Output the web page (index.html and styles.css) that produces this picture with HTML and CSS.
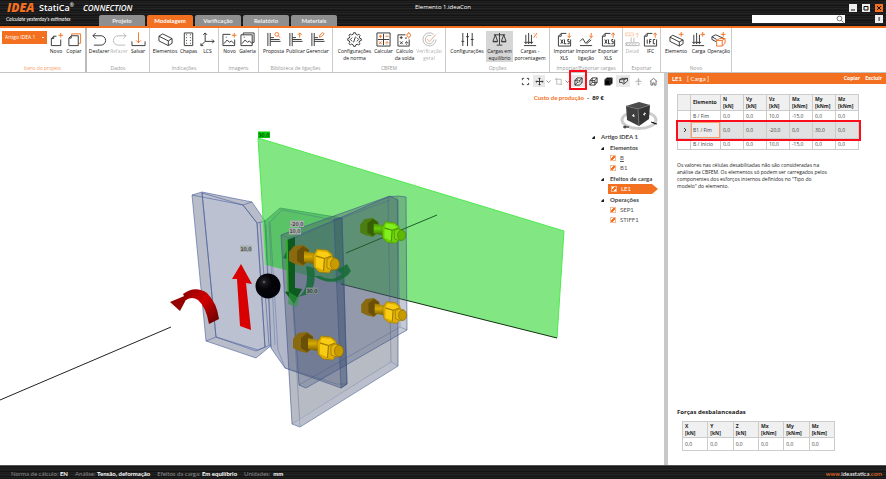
FILE: index.html
```html
<!DOCTYPE html>
<html lang="pt">
<head>
<meta charset="utf-8">
<title>Elemento 1.ideaCon</title>
<link rel="stylesheet" href="styles.css">
</head>
<body>
<svg class="defs" aria-hidden="true">
  <defs>
    <symbol id="new" viewBox="0 0 16 16"><path d="M5 4.500h3M12.500 8v6.500h-10V7L5 4.500V7H2.500"/><path class="o" d="M12.500 1v5M10 3.500h5"/></symbol>
    <symbol id="copy" viewBox="0 0 16 16"><path class="o" d="M5 3.500V2h9.500v10H12.500"/><path d="M4.500 4h7.500v10.500h-10V6.500L4.500 4v2.500H2"/></symbol>
    <symbol id="undo" viewBox="0 0 16 16"><path d="M4 1L1 4l3 3M1 4h8.500a5 5 0 0 1 0 10H2"/></symbol>
    <symbol id="redo" viewBox="0 0 16 16"><path d="M12 1l3 3-3 3M15 4H6.500a5 5 0 0 0 0 10H14"/></symbol>
    <symbol id="save" viewBox="0 0 16 16"><path d="M1 10v4.500h14V10"/><path class="o" d="M8 0.500v11M5.500 9L8 11.500 10.500 9"/></symbol>
    <symbol id="beam" viewBox="0 0 16 16"><path d="M1 4.500L5 2l10 5v5l-4 2.500-10-5zM1 4.500l10 5L15 7M11 9.500v5"/></symbol>
    <symbol id="plate" viewBox="0 0 16 16"><path d="M3.500 1h9v13.500h-9z"/><path d="M5.500 3h1M9.500 3h1M5.500 6h1M9.500 6h1M5.500 9h1M9.500 9h1M5.500 12h1M9.500 12h1"/></symbol>
    <symbol id="lcs" viewBox="0 0 16 16"><path d="M5.500 10V1M3.500 3l2-2 2 2M5.500 10H15M13 8l2 2-2 2M5.500 10L1 14.500M1 12v2.500h2.500"/></symbol>
    <symbol id="imgnew" viewBox="0 0 16 16"><path d="M9 2.500H1v12h12.500V8M2 12.500l3.500-4 2.500 2.500 2-1.500 3 3M4 5.500h1"/><path class="o" d="M13 1v5M10.500 3.500h5"/></symbol>
    <symbol id="gallery" viewBox="0 0 16 16"><path d="M3.500 3V1H15v10h-2M1 3h12v11.500H1zM2 12.500l3.500-4 2.500 2.500 2-1.500 3 3M4 5.500h1"/></symbol>
    <symbol id="join" viewBox="0 0 16 16"><path d="M2 1v14M4.500 1v14M4.500 6h4M4.500 10h11M4.500 8h10"/><path class="o" d="M13.500 2.500a2 2 0 1 0-4 0 2 2 0 0 0 4 0M13 4l2 2"/></symbol>
    <symbol id="publish" viewBox="0 0 16 16"><path d="M2 1v14M4.500 1v14M4.500 6h4M4.500 10h11M4.500 8h10"/><path class="o" d="M12.500 6V1M10.500 3l2-2 2 2"/></symbol>
    <symbol id="manage" viewBox="0 0 16 16"><path d="M2 1v14M4.500 1v14M4.500 6h4M4.500 10h11M4.500 8h10"/><path class="o" d="M10 5.500l.5-2 3-3 1.500 1.500-3 3z"/></symbol>
    <symbol id="norm" viewBox="0 0 16 16"><path d="M6.500 2.500L7 .8h2l.5 1.700 1.500.7 1.600-.9 1.300 1.300-.9 1.600.7 1.500 1.500.5v1.800l-1.600.5-.7 1.500.9 1.600-1.300 1.300-1.600-.9-1.500.7L9 15.300H7l-.5-1.700-1.500-.7-1.600.9-1.300-1.300.9-1.600-.7-1.500L.8 9V7l1.600-.5L3 5l-.9-1.600 1.300-1.300L5 3.100zM5.500 6l-2 2 2 2M10.500 6l2 2-2 2M9 5l-2 6"/></symbol>
    <symbol id="calc" viewBox="0 0 16 16"><path d="M1 1h14v14H1zM8 2v12M2 8h12"/><path class="o" d="M3 4.500h3.500M4.700 3v3.500M10 4.500h3.500M3.200 10l3 3M6.200 10l-3 3M10 11.500h3.500M11.700 9.500v.8M11.700 12.700v.8"/></symbol>
    <symbol id="weld" viewBox="0 0 16 16"><path d="M9 3H1v12h12V8M3 6h3M4.500 4.500v3M3.200 10l3 3M6.200 10l-3 3M8.500 11.500h3.500M10.200 9.500v.8M10.200 12.700v.8M8.500 6.500h2"/><path class="o" d="M14.500 3.500a2 2 0 1 0-4 0 2 2 0 0 0 4 0M12.500 0v1M12.500 6v1"/></symbol>
    <symbol id="check" viewBox="0 0 16 16"><path d="M15 8A7 7 0 1 1 12.500 2.500M12.500 8A4.500 4.500 0 1 1 10 4M5.500 7.500l2.500 3L14.500 3"/><path class="o" d="M5.500 7l2.500 3L14.500 2.500"/></symbol>
    <symbol id="sliders" viewBox="0 0 16 16"><path d="M3 1v14M8 1v14M13 1v14M1.500 10h3M6.500 5h3M11.500 8h3"/></symbol>
    <symbol id="scale" viewBox="0 0 16 16"><path d="M8 1v12.500M5 14h6M2 3h12M3.500 3L1 10h5zM12.500 3L10 10h5zM1 10.500h5M10 10.500h5"/></symbol>
    <symbol id="percent" viewBox="0 0 16 16"><path d="M3 3v9M6 1v11M9 3v9M1.500 10.500L3 12.500l1.500-2M4.500 10.500L6 12.500l1.500-2M7.500 10.500L9 12.500l1.500-2M1 14.500h13"/><path class="o" d="M15 1l-3.500 5M11.500 2h.8M14 5.500h.8"/></symbol>
    <symbol id="xlsin" viewBox="0 0 16 16"><path d="M10 1.500H4.500L1.500 4.500v10.500h13V8M4.500 1.500v3h-3M4 8l2.500 4.500M6.500 8L4 12.500M8 8v4.500h2M13 8h-1.500v2H13v2.500h-1.800"/><path class="o" d="M13 1v5M11.200 4L13 6l1.800-2"/></symbol>
    <symbol id="join-in" viewBox="0 0 16 16"><path d="M1 10l3-3 3 5 5-5M1 14.500h13M8 12.500l5-4"/><path class="o" d="M13 1v5M11.200 4L13 6l1.800-2"/></symbol>
    <symbol id="xlsout" viewBox="0 0 16 16"><path d="M10 1.500H4.500L1.500 4.500v10.500h13V8M4.500 1.500v3h-3M4 8l2.500 4.500M6.500 8L4 12.500M8 8v4.500h2M13 8h-1.500v2H13v2.500h-1.800"/><path class="o" d="M13 6V1M11.200 3L13 1l1.800 2"/></symbol>
    <symbol id="ifc" viewBox="0 0 16 16"><path d="M10 1.500H4.500L1.500 4.500v10.500h13V8M4.500 1.500v3h-3M4.500 8v4.500M9 8H7v4.500M7 10.200h1.700M13 8h-2v4.500h2"/><path class="o" d="M13 6V1M11.200 3L13 1l1.800 2"/></symbol>
    <symbol id="detail" viewBox="0 0 16 16"><path d="M1 11.500h14v3H1zM1 14l2-2M4 14l2-2M7 14l2-2M10 14l2-2M6.500 6v5M9.500 6v5"/><path class="o" d="M0 1h9v3H0zM2 2v1M5 2v1M13 6V1M11.200 3L13 1l1.800 2"/></symbol>
    <symbol id="beamnew" viewBox="0 0 16 16"><path d="M1 5.500L4 3.500l11 5v4l-4 2.500-10-5zM1 5.500l10 5 4-2M11 10.500v4.500"/><path class="o" d="M13 0v5M10.500 2.500h5"/></symbol>
    <symbol id="loadnew" viewBox="0 0 16 16"><path d="M3 3v9M6 1v11M9 3v9M1.500 10.500L3 12.500l1.500-2M4.500 10.500L6 12.500l1.500-2M7.500 10.500L9 12.500l1.500-2M1 14.500h13"/><path class="o" d="M12.500 0v5M10 2.500h5"/></symbol>
    <symbol id="opnew" viewBox="0 0 16 16"><path d="M6 10.500L1 8V5l4-2 9 4M1 5l5 3"/><path class="o" d="M13 0v5M10.500 2.500h5M6 9l3-2h6v5l-3 3H6zM6 9h6v6M12 9l3-2"/></symbol>

    <linearGradient id="shank" x1="0" y1="0" x2="0" y2="1"><stop offset="0" stop-color="#9c7a00"/><stop offset=".4" stop-color="#d6ab00"/><stop offset="1" stop-color="#6e5400"/></linearGradient>
    <linearGradient id="moment" x1="0" y1="0" x2="1" y2="1"><stop offset="0" stop-color="#8c0000"/><stop offset=".45" stop-color="#d00000"/><stop offset="1" stop-color="#5c0000"/></linearGradient>
    <radialGradient id="ball" cx=".34" cy=".34" r=".6"><stop offset="0" stop-color="#77777c"/><stop offset=".12" stop-color="#1c1c22"/><stop offset=".5" stop-color="#050507"/><stop offset="1" stop-color="#02030a"/></radialGradient>
    <g id="bolt">
      <path d="M-12 -4L-7 -10 2 -11 8 -7 8 5 2 10 -6 8 -12 5z" fill="#8a6a10"/>
      <path d="M-4 -5L2 -10 8 -6 8 4 2 9 -4 5z" fill="#6a5006"/>
      <path d="M3 -5L18 -2V9L3 6z" fill="url(#shank)"/>
      <path d="M12 0L16 -7 26 -6 31 -2 33 10 28 17 18 16 13 11z" fill="#d9a900" stroke="#96730a" stroke-width=".6"/>
      <path d="M17 -5L26 -4 30 0 24 2 15 -1zM15 1l8 2-1 11-7-3z" fill="#f9cd14"/>
      <path d="M24 2l6-2 1 9-4 6-4-1z" fill="#dfb006"/>
      <path d="M15 0l8.500 2.500L22.500 15M23.500 2.500L30 0" fill="none" stroke="#8c6a00" stroke-width=".8"/>
      <path d="M26 3l4-2 5 1 1 11-4 1-6-2z" fill="#e5b60a" stroke="#8c6a00" stroke-width=".6"/>
      <ellipse cx="34" cy="8" rx="4.500" ry="5.800" fill="#c79a00" stroke="#7f6000" stroke-width=".6"/>
    </g>
  </defs>
</svg>

<div class="app">
<header class="top">
  <div class="titlebar">
    <div class="brand"><span class="idea">IDEA</span><span class="statica">StatiCa<sup>®</sup></span><span class="conn">CONNECTION</span></div>
    <h1>Elemento 1.ideaCon</h1>
    <div class="win">
      <button type="button" aria-label="Minimizar"><svg viewBox="0 0 8 8"><path d="M2 6h4"/></svg></button>
      <button type="button" aria-label="Maximizar"><svg viewBox="0 0 8 8"><path d="M2 2.500h4v3.500H2z"/></svg></button>
      <button type="button" class="close" aria-label="Fechar"><svg viewBox="0 0 8 8"><path d="M2 2l4 4M6 2L2 6"/></svg></button>
    </div>
  </div>
  <div class="tabbar">
    <p class="slogan">Calculate yesterday's estimates</p>
    <nav class="tabs">
      <button type="button">Projeto</button><button type="button" class="on">Modelagem</button><button type="button">Verificação</button><button type="button">Relatório</button><button type="button">Materiais</button>
    </nav>
    <div class="search"><input type="search" aria-label="Pesquisar"><svg viewBox="0 0 8 8"><circle cx="3.500" cy="3.500" r="2.400"/><path d="M5.300 5.300L7.500 7.500"/></svg></div>
    <button type="button" class="info" aria-label="Informações">i</button>
  </div>
</header>

<div class="ribbon">
  <section class="g g-proj"><div class="items">
    <select aria-label="Item do projeto"><option>Artigo IDEA 1</option></select>
    <button type="button" class="w18"><svg><use href="#new"/></svg>Novo</button>
    <button type="button" class="w18"><svg><use href="#copy"/></svg>Copiar</button>
  </div><h2>Itens do projeto</h2></section>
  <section class="g g-data"><div class="items">
    <button type="button" class="w20"><svg><use href="#undo"/></svg>Desfazer</button>
    <button type="button" class="w20" disabled><svg><use href="#redo"/></svg>Refazer</button>
    <button type="button" class="w18"><svg><use href="#save"/></svg>Salvar</button>
  </div><h2>Dados</h2></section>
  <section class="g g-ind"><div class="items">
    <button type="button" class="w28"><svg><use href="#beam"/></svg>Elementos</button>
    <button type="button" class="w20"><svg><use href="#plate"/></svg>Chapas</button>
    <button type="button" class="w18"><svg><use href="#lcs"/></svg>LCS</button>
  </div><h2>Indicações</h2></section>
  <section class="g g-img"><div class="items">
    <button type="button" class="w18"><svg><use href="#imgnew"/></svg>Novo</button>
    <button type="button" class="w18"><svg><use href="#gallery"/></svg>Galeria</button>
  </div><h2>Imagens</h2></section>
  <section class="g g-lib"><div class="items">
    <button type="button" class="w22"><svg><use href="#join"/></svg>Proposta</button>
    <button type="button" class="w22"><svg><use href="#publish"/></svg>Publicar</button>
    <button type="button" class="w22"><svg><use href="#manage"/></svg>Gerenciar</button>
  </div><h2>Biblioteca de ligações</h2></section>
  <section class="g g-cbfem"><div class="items">
    <button type="button" class="w38"><svg><use href="#norm"/></svg>Configurações<br>de norma</button>
    <button type="button" class="w20"><svg><use href="#calc"/></svg>Calcular</button>
    <button type="button" class="w22"><svg><use href="#weld"/></svg>Cálculo<br>da solda</button>
    <button type="button" class="w28" disabled><svg><use href="#check"/></svg>Verificação<br>geral</button>
  </div><h2>CBFEM</h2></section>
  <section class="g g-opt"><div class="items">
    <button type="button" class="w38"><svg><use href="#sliders"/></svg>Configurações</button>
    <button type="button" class="w28 on"><svg><use href="#scale"/></svg>Cargas em<br>equilíbrio</button>
    <button type="button" class="w34"><svg><use href="#percent"/></svg>Cargas -<br>porcentagem</button>
  </div><h2>Opções</h2></section>
  <section class="g g-imp"><div class="items">
    <button type="button" class="w22"><svg><use href="#xlsin"/></svg>Importar<br>XLS</button>
    <button type="button" class="w22"><svg><use href="#join-in"/></svg>Importar<br>ligação</button>
    <button type="button" class="w22"><svg><use href="#xlsout"/></svg>Exportar<br>XLS</button>
  </div><h2>Importar/Exportar cargas</h2></section>
  <section class="g g-exp"><div class="items">
    <button type="button" class="w18" disabled><svg><use href="#detail"/></svg>Detail</button>
    <button type="button" class="w18"><svg><use href="#ifc"/></svg>IFC</button>
  </div><h2>Exportar</h2></section>
  <section class="g g-new"><div class="items">
    <button type="button" class="w28"><svg><use href="#beamnew"/></svg>Elemento</button>
    <button type="button" class="w18"><svg><use href="#loadnew"/></svg>Carga</button>
    <button type="button" class="w22"><svg><use href="#opnew"/></svg>Operação</button>
  </div><h2>Novo</h2></section>
</div>

<main class="work">
  <section class="view">
    <svg class="scene" viewBox="0 73 664 392" preserveAspectRatio="xMinYMin meet" role="img" aria-label="Modelo 3D">
      <path d="M0 400L171 327" stroke="#222" fill="none"/>
      <g stroke="#4a5f9c" stroke-width=".6" stroke-linejoin="round">
        <path d="M192 195L202 192 252 202 265 221 273 344 256 358 206 341z" fill="#b9bdca"/>
        <path d="M202 193L243 205 257 223 265 347 256 351 216 337z" fill="#bcc1d1"/>
        <path d="M192 195L243 205 257 223 265 347M202 192L216 337 206 341M216 337L258 350 273 344M243 205L252 202M257 223L265 221M260 222L269 345" fill="none"/>
      </g>
      <path d="M265 221L280 208 342 218 347 384 341 388 285 368 271 348z" fill="#b2b8ca" stroke="#4a5f9c" stroke-width=".6"/>
      <path d="M258 138L564 231 557 338 266 265z" fill="#00cf00" fill-opacity=".49"/>
      <path d="M266 265L258 138 564 231 557 338" fill="none" stroke="#4dea4d"/>
      <path d="M341 284L557 338" stroke="#10300f" fill="none"/>
      <g stroke="#3d528f" stroke-width=".6" stroke-linejoin="round">
        <path d="M281 235L289 232 390 196 398 200 398 366 300 427 292 424z" fill="#4c5468" fill-opacity=".4"/>
        <path d="M289 240L388 197 398 196 406 197 407 330 306 388 299 385z" fill="#3f4f74" fill-opacity=".3"/>
        <path d="M289 238L300 427M292 424L391 362 398 366M391 362L388 197M281 235L289 238 390 200M397 197L400 327M299 385L400 327 407 330" fill="none" stroke-opacity=".55"/>
        <path d="M285 368L337 384 347 384M271 348L266 225M275 345L269 222M285 368L278 350 270 222 282 210 334 220" fill="none" stroke-opacity=".55"/>
        <path d="M334 219L342 218 347 384 341 388z" fill="#29405f" fill-opacity=".25"/>
      </g>
      <path d="M398 366L391 362 300 418 292 424 300 427z" fill="#c4c9da" fill-opacity=".35"/>
      <path d="M346 253L437 215" stroke="#1c5c2a" fill="none"/>
      <use href="#bolt" class="tint" transform="translate(371 228) scale(.9)"/>
      <use href="#bolt" transform="translate(372 308) scale(.9)"/>
      <use href="#bolt" transform="translate(305 343)"/>
      <g fill="#1a6b3a" fill-opacity=".9">
        <path d="M283 258L289 246 290 260z"/>
        <path d="M320 276Q332 283 342 274L337 270 347 264 351 271 348 275Q332 288 314 276z"/>
        <path d="M306 266L314 268Q317 286 308 294L298 297Q310 290 306 266z"/>
      </g>
      <path d="M287 240L295 237 295 288 302 289 294 304 285 292 288 291z" fill="#0c5a1e"/>
      <path d="M289 292L288 304 297 307 299 298z" fill="#2f9b3f" fill-opacity=".6"/>
      <path d="M287 240L288 292" stroke="#2bb320" stroke-width="1.500"/>
      <use href="#bolt" transform="translate(301 256)"/>
      <path d="M241 264L252 284 246 283 251 330 240 326 237 279 232 279z" fill="#d80000"/>
      <path d="M183 294Q195 285 207 293 217 303 219 319L209 324Q206 307 198 300 192 296 186 300z" fill="url(#moment)"/>
      <path d="M170 302L189 294 180 311z" fill="#960000"/>
      <circle cx="268" cy="286" r="12.500" fill="url(#ball)"/>
      <g class="tags">
        <path d="M258 131.500h12v6.500h-12z" fill="#05c905"/>
        <path d="M240 245.500h12v6.500h-12zM290 220.500h14v6.500h-14zM289 228h12v6.500h-12z" fill="#a9afae"/>
        <path d="M306 287.500h12v6.500h-12z" fill="#7a8f8c"/>
        <text x="264" y="137">30,0</text><text x="246" y="251">10,0</text><text x="297" y="226">-20,0</text><text x="295" y="233">10,0</text><text x="312" y="293">30,0</text>
      </g>
    </svg>
    <div class="tools">
      <button type="button" aria-label="Ajustar"><svg viewBox="0 0 10 10"><path d="M1.500 3.500v-2h2M6.500 1.500h2v2M8.500 6.500v2h-2M3.500 8.500h-2v-2"/></svg></button>
      <button type="button" class="on slim" aria-label="Mover"><svg viewBox="0 0 10 10"><path d="M5 1v8M1 5h8M4 2l1-1 1 1M4 8l1 1 1-1M2 4L1 5l1 1M8 4l1 1-1 1"/></svg></button>
      <button type="button" class="chev" aria-label="Opções de mover"><svg viewBox="0 0 10 10"><path d="M1 3l4 4 4-4"/></svg></button>
      <button type="button" class="dim slim" aria-label="Recortar"><svg viewBox="0 0 10 10"><path d="M3 1v7h6M1 2.500h7V9"/></svg></button>
      <button type="button" class="chev" aria-label="Opções de recorte"><svg viewBox="0 0 10 10"><path d="M1 3l4 4 4-4"/></svg></button>
      <button type="button" class="on marked" aria-label="Transparente"><svg viewBox="0 0 10 10"><path d="M1 4L3.500 1H9v5L6.500 9H1zM1 4h2M5 4h1.500v2M6.500 4L9 1M1 9l2.500-3H5M8 6h1M3.500 2v3"/></svg></button>
      <button type="button" aria-label="Estrutura de arame"><svg viewBox="0 0 10 10"><path d="M1 4L3.500 1H9v5L6.500 9H1zM1 4h5.500v5M6.500 4L9 1M1 9l2.500-3H9M3.500 6V1"/></svg></button>
      <button type="button" aria-label="Sólido"><svg viewBox="0 0 10 10"><path d="M1 3L3 1h6v6L7 9H1z" fill="#000"/><path d="M1.500 3.200h5.300L9 1M6.800 3.200V9" stroke="#777" stroke-width=".6"/></svg></button>
      <button type="button" class="on" aria-label="Seção"><svg viewBox="0 0 10 10"><path d="M.5 3L3 1.500h6.500V4.500L5 8 3.500 6H.5zM.5 3h5L9.500 1.500M5.500 3v4"/></svg></button>
      <button type="button" class="dim" aria-label="Centro"><svg viewBox="0 0 10 10"><path d="M5 1v8M3 7l2 2 2-2M1.500 5h7M3 3.500h4"/></svg></button>
      <button type="button" aria-label="Vista inicial"><svg viewBox="0 0 10 10"><path d="M1 5l4-3.500L9 5M2.200 4.500V9h2V6.500h1.600V9h2V4.500" stroke="#666"/></svg></button>
    </div>
    <p class="cost"><span>Custo de produção</span>&nbsp; - &nbsp;<b>89 €</b></p>
    <svg class="navcube" viewBox="0 0 40 30"><ellipse cx="19" cy="18" rx="17" ry="8.500" fill="none" stroke="#ccc" stroke-width="3"/><path d="M6 4L19 0 30 3 18 7z" fill="#4c4c4c"/><path d="M6 4L18 7 19 24 7 18z" fill="#3f3f3f"/><path d="M18 7L30 3 29 17 19 24z" fill="#333"/><path d="M6 4L18 7 30 3M18 7l1 17" stroke="#777" stroke-width=".7" fill="none"/><path d="M3 25h6M5 23.500v3M31 20l6 2M33 20l2 2.500" stroke="#111" fill="none"/><path d="M12 13.500l3 .6M13.500 12v3M23 12.500l3-1M24.500 10.500v3" stroke="#ddd"/></svg>
    <div class="tree">
      <p class="root">Artigo IDEA 1</p>
      <ul>
        <li class="head">Elementos</li>
        <li><label><input type="checkbox" checked><u>B</u></label></li>
        <li><label><input type="checkbox" checked>B1</label></li>
      </ul>
      <ul>
        <li class="head">Efeitos de carga</li>
        <li class="sel"><label><input type="checkbox" checked>LE1</label></li>
      </ul>
      <ul>
        <li class="head">Operações</li>
        <li><label><input type="checkbox" checked>SEP1</label></li>
        <li><label><input type="checkbox" checked>STIFF1</label></li>
      </ul>
    </div>
  </section>

  <aside class="panel">
    <header><b>LE1</b><span>[ Carga ]</span><button type="button">Copiar</button><button type="button">Excluir</button></header>
    <div class="body">
      <table class="loads">
        <thead><tr><th class="c0"></th><th class="c1">Elemento</th><th>N<br>[kN]</th><th>Vy<br>[kN]</th><th>Vz<br>[kN]</th><th>Mx<br>[kNm]</th><th>My<br>[kNm]</th><th>Mz<br>[kNm]</th></tr></thead>
        <tbody>
          <tr><td></td><td>B / Fim</td><td>0,0</td><td>0,0</td><td>10,0</td><td>-15,0</td><td>0,0</td><td>0,0</td></tr>
          <tr class="cur"><td><svg viewBox="0 0 6 6"><path d="M2 1l2 2-2 2"/></svg></td><td class="cell">B1 / Fim</td><td>0,0</td><td>0,0</td><td>-20,0</td><td>0,0</td><td>30,0</td><td>0,0</td></tr>
          <tr><td></td><td>B / Início</td><td>0,0</td><td>0,0</td><td>10,0</td><td>-15,0</td><td>0,0</td><td>0,0</td></tr>
        </tbody>
      </table>
      <p class="note">Os valores nas células desabilitadas não são consideradas na<br>análise da CBFEM. Os elementos só podem ser carregados pelos<br>componentes dos esforços internos definidos no "Tipo do<br>modelo" do elemento.</p>
      <h3>Forças desbalanceadas</h3>
      <table class="forces">
        <thead><tr><th>X<br>[kN]</th><th>Y<br>[kN]</th><th>Z<br>[kN]</th><th>Mx<br>[kNm]</th><th>My<br>[kNm]</th><th>Mz<br>[kNm]</th></tr></thead>
        <tbody><tr><td>0,0</td><td>0,0</td><td>0,0</td><td>0,0</td><td>0,0</td><td>0,0</td></tr></tbody>
      </table>
    </div>
  </aside>
</main>

<footer>
  <span>Norma de cálculo: <b>EN</b></span><span>Análise: <b>Tensão, deformação</b></span><span>Efeitos da carga: <b>Em equilíbrio</b></span><span>Unidades: &nbsp;<b>mm</b></span>
  <a href="#"><i>www.</i>ideastatica<i>.com</i></a>
</footer>
</div>
</body>
</html>
```
FILE: styles.css
```css
* { box-sizing: border-box; margin: 0; padding: 0; }
body { font-family: Lato, "Open Sans", sans-serif; font-size: 6px; line-height: 7px; color: #222; background: #fff; }
button, input, select { font: inherit; color: inherit; border: 0; background: none; }
svg { fill: none; stroke: #333; }
.scene, .navcube { stroke: none; }
.defs { position: absolute; width: 0; height: 0; }
.o { stroke: #f37021; }
.app { min-height: 100vh; display: flex; flex-direction: column; }

.top, footer { background: repeating-linear-gradient(#141414 0 1px, #212121 1px 2px, #181818 2px 3px, #252525 3px 4px, #1b1b1b 4px 5px); color: #fff; }
.top { border-bottom: 2px solid #f37021; }
.titlebar { display: grid; grid-template-columns: 1fr auto 1fr; height: 15px; }
.brand { display: flex; align-items: center; padding-left: 7px; white-space: nowrap; }
.idea { width: 32px; font: italic 800 12px/13px "Open Sans", sans-serif; color: #f37021; }
.statica { width: 44px; font: 600 9px/13px "Open Sans", sans-serif; }
.statica sup { font-size: 5px; line-height: 5px; }
.conn { font: italic 600 8px/13px "Open Sans", sans-serif; }
h1 { font-family: "Open Sans", sans-serif; font-size: 6px; font-weight: 400; line-height: 15px; }
.win { display: flex; justify-content: flex-end; gap: 5px; padding: 4px 3px 0 0; }
.win button { width: 8px; height: 8px; background: #eee; display: flex; }
.win .close { background: #f37021; }
.win svg { width: 8px; height: 8px; stroke: #111; }
.tabbar { display: flex; height: 11px; }
.slogan { width: 99px; padding-left: 6px; font-size: 5px; font-style: italic; line-height: 8px; }
.tabs { display: flex; gap: 2px; flex: 1; }
.tabs button { width: 46px; height: 11px; background: #8f8f8f; border-radius: 2px 2px 0 0; font-weight: 700; color: #eee; line-height: 11px; }
.tabs .on { background: #f37021; color: #fff; }
.search { position: relative; width: 93px; height: 8px; }
.search input { display: block; width: 100%; height: 8px; background: #fff; }
.search svg { position: absolute; right: 1px; top: 0; width: 8px; height: 8px; stroke: #777; }
.info { width: 8px; height: 8px; margin: 0 3px 0 30px; background: #eee; color: #111; font-weight: 800; line-height: 8px; }

.ribbon { display: flex; height: 45px; border-bottom: 1px solid #c4c4c4; background: #fff; font-family: "Open Sans", sans-serif; font-size: 5px; }
.g { display: flex; flex-direction: column; border-right: 1px solid #ccc; }
.items { display: flex; justify-content: center; flex: 1; padding-top: 3px; }
.items button { display: flex; flex-direction: column; align-items: center; white-space: nowrap; text-align: center; height: 31px; color: #111; flex: none; }
.items svg { width: 15px; height: 15px; margin: 1px 0; flex: none; }
.items .on { background: #d6d6d6; }
.items :disabled { opacity: .35; }
.items select { appearance: none; width: 45px; height: 13px; padding: 0 3px; background: #f37021 linear-gradient(#fff, #fff) right 3px center / 2px 1px no-repeat; color: #fff; }
.g h2 { font-size: 5px; font-weight: 400; color: #999; text-align: center; line-height: 7px; white-space: nowrap; }
.g-proj { width: 87px; border-right: 2px solid #bbb; }
.g-proj h2 { color: #f79a62; }
.g-data { width: 63px; } .g-ind { width: 69px; } .g-img { width: 40px; } .g-lib { width: 74px; }
.g-cbfem { width: 113px; } .g-opt { width: 104px; } .g-imp { width: 73px; } .g-exp { width: 38px; } .g-new { width: 71px; }
.w18 { width: 18px; } .w20 { width: 20px; } .w22 { width: 22px; } .w28 { width: 27px; } .w34 { width: 34px; } .w38 { width: 38px; }

.work { flex: 1; display: flex; }
.view { position: relative; flex: 1; display: flex; flex-direction: column; align-items: flex-end; }
.scene { position: absolute; left: 0; top: 0; width: 100%; height: 100%; }
.tags text { font: 5px "DejaVu Sans", sans-serif; text-anchor: middle; fill: #111; }
.tint { filter: hue-rotate(38deg); }
.tools, .cost, .navcube, .tree { position: relative; }
.tools { display: flex; padding: 2px 4px 0 0; gap: 1px; }
.tools button { width: 14px; height: 12px; display: flex; align-items: center; justify-content: center; }
.tools svg { width: 9px; height: 9px; }
.tools .slim { width: 12px; }
.tools .chev { width: 5px; }
.tools .chev svg { width: 5px; }
.tools .on { background: #e9e9e9; }
.tools .dim { opacity: .35; }
.tools .marked { position: relative; }
.marked::after { content: ""; position: absolute; inset: -5px -2px -3px -2px; border: 2px solid #fb0d1b; }
.cost { margin: 7px 60px 0 0; font-weight: 700; line-height: 8px; }
.cost span { color: #f37021; }
.navcube { width: 40px; height: 30px; margin: 0 4px 0 0; }
.tree { width: 72px; line-height: 10px; display: flex; flex-direction: column; gap: 1px; }
.tree ul { list-style: none; padding-left: 9px; }
.tree .root, .tree .head { position: relative; padding-left: 9px; font-weight: 700; color: #444; }
.root::before, .head::before { content: ""; position: absolute; left: 0; top: 4px; border: 2px solid transparent; border-right-color: #222; border-bottom-color: #222; border-top-width: 1px; border-left-width: 1px; }
.tree li { height: 10px; }
.tree label { display: flex; align-items: center; gap: 4px; padding-left: 9px; color: #555; }
.tree input { appearance: none; width: 6px; height: 6px; border: 1px solid #f9b98f; background: #fff linear-gradient(135deg, #fff 30%, #f37021 30% 75%, #fff 75%); }
.tree .sel label { width: 50px; padding-left: 3px; margin-left: 7px; background: #f37021; color: #fff; clip-path: polygon(0 0, 88% 0, 100% 50%, 88% 100%, 0 100%); }

.panel { width: 222px; border-left: 4px solid #c8c8c8; display: flex; flex-direction: column; }
.panel header { display: flex; gap: 5px; height: 11px; padding: 0 4px; background: #f37021; color: #fff; line-height: 11px; }
.panel header span { flex: 1; }
.panel header button { font-family: "Open Sans", sans-serif; font-size: 5px; font-weight: 700; }
.body { flex: 1; display: flex; flex-direction: column; padding: 10px 27px 14px 9px; font-family: "Open Sans", sans-serif; font-size: 5px; }
table { border-collapse: collapse; table-layout: fixed; border: 1px solid #aaa; }
th, td { border: 1px solid #ccc; text-align: left; padding: 0 0 0 2px; font-weight: 400; line-height: 7px; white-space: nowrap; }
th { background: #f0f0f0; font-weight: 700; height: 16px; }
td { height: 11px; color: #444; }
.loads { width: 100%; }
.c0 { width: 13px; } .c1 { width: 30px; }
.cur td { height: 17px; background: #e1e1e1; }
.cur { outline: 2px solid #fb0d1b; }
.cur .cell { box-shadow: inset 0 0 0 1px #f5a06c; background: #ececec; }
.cur svg { display: block; width: 6px; height: 6px; margin-left: 2px; }
.note { margin: 12px 0 0; line-height: 7px; }
h3 { margin-top: auto; font-size: 6px; line-height: 10px; font-weight: 700; }
.forces { width: 153px; margin: 4px 0 0 5px; }
.forces td { height: 13px; }

footer { display: flex; gap: 7px; height: 14px; padding: 0 4px 0 11px; line-height: 15px; color: #8a8a8a; border-top: 1px solid #555; }
footer b { color: #fff; }
footer a { margin-left: auto; color: #fff; text-decoration: none; }
footer i { color: #f37021; font-style: normal; }
```
